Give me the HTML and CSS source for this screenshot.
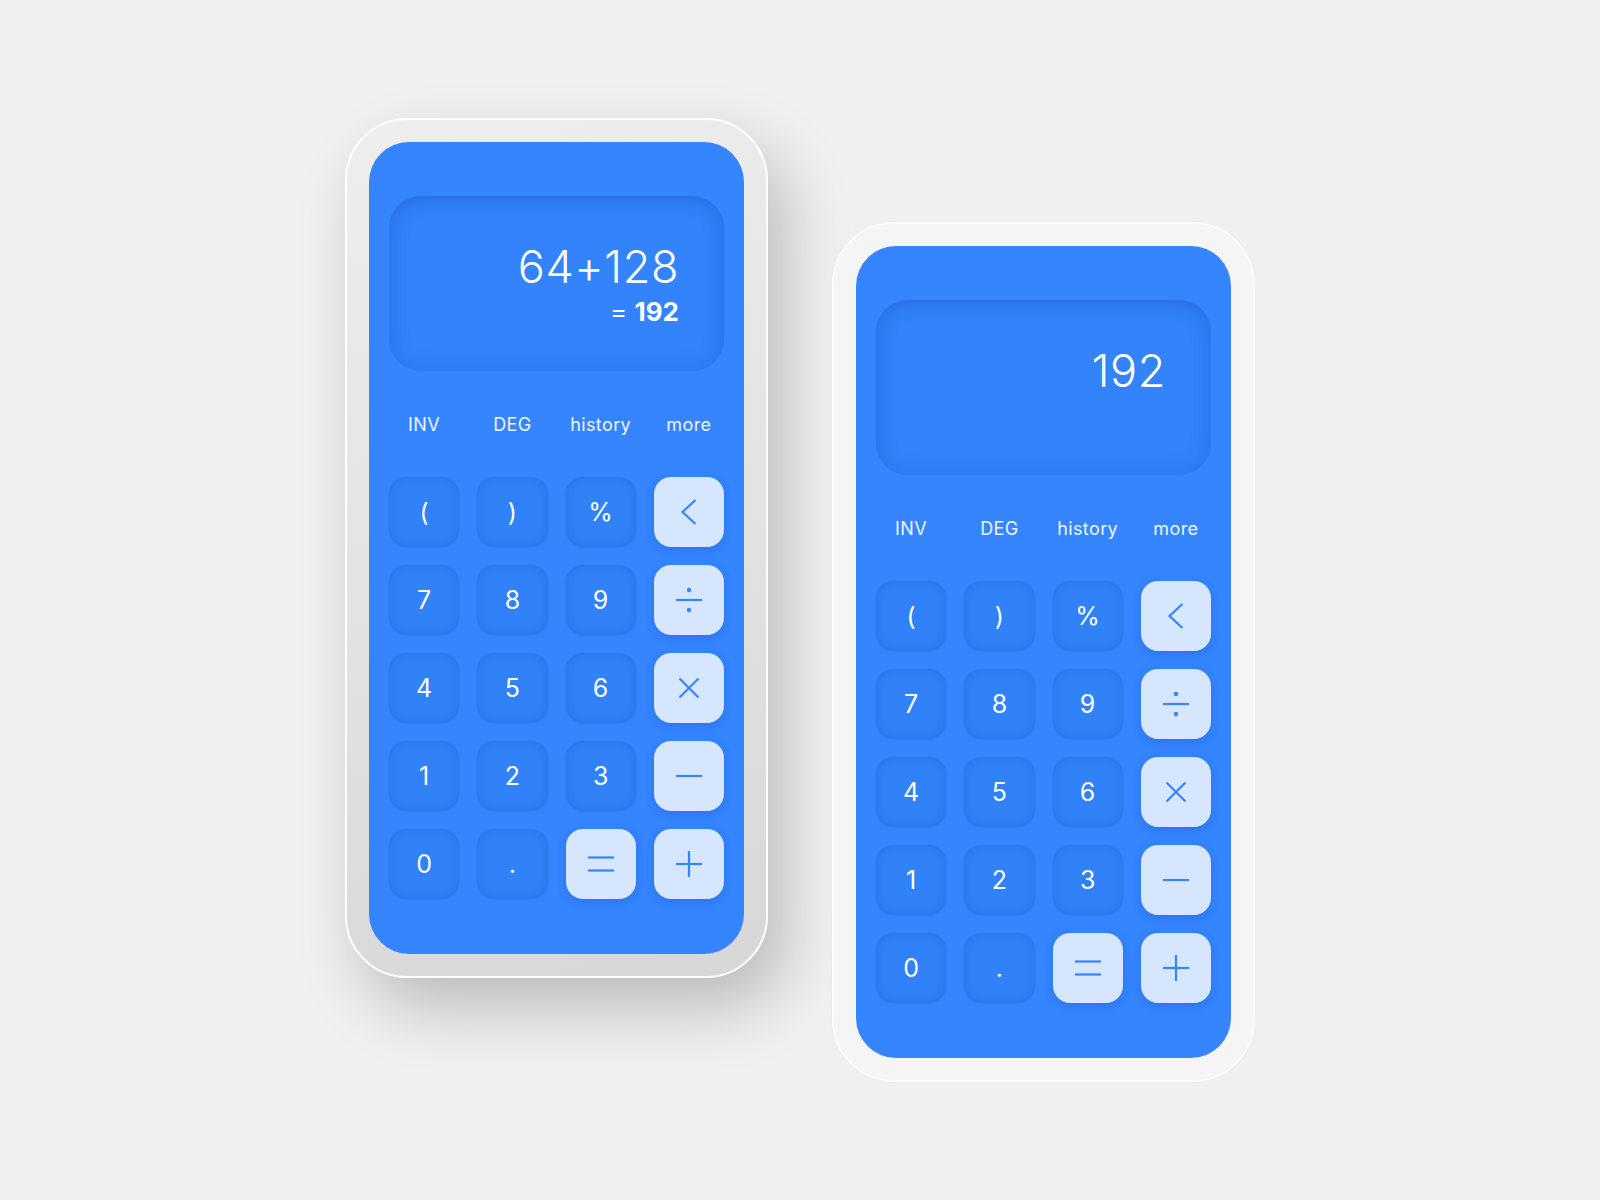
FILE: index.html
```html
<!DOCTYPE html>
<html lang="en">
<head>
<meta charset="utf-8">
<title>Calculator</title>
<link rel="stylesheet" href="styles.css">
</head>
<body>
<div class="stage">
  <div class="phone phone-dark">
    <div class="screen">
      <div class="display">
        <div class="expr">64+128</div>
        <div class="result"><span class="eq">=</span> <b>192</b></div>
      </div>
      <div class="labels"><span>INV</span><span>DEG</span><span>history</span><span>more</span></div>
      <div class="keys">
        <div class="key">(</div><div class="key">)</div><div class="key">%</div>
        <div class="key op"><svg viewBox="0 0 70 70"><polyline points="41.5,23 28.5,35 41.5,47"/></svg></div>
        <div class="key">7</div><div class="key">8</div><div class="key">9</div>
        <div class="key op"><svg viewBox="0 0 70 70"><line x1="22" y1="35" x2="48" y2="35"/><circle cx="35" cy="25" r="2.2"/><circle cx="35" cy="45" r="2.2"/></svg></div>
        <div class="key">4</div><div class="key">5</div><div class="key">6</div>
        <div class="key op"><svg viewBox="0 0 70 70"><line x1="25.5" y1="25.5" x2="44.5" y2="44.5"/><line x1="44.5" y1="25.5" x2="25.5" y2="44.5"/></svg></div>
        <div class="key">1</div><div class="key">2</div><div class="key">3</div>
        <div class="key op"><svg viewBox="0 0 70 70"><line x1="22" y1="35" x2="48" y2="35"/></svg></div>
        <div class="key">0</div><div class="key dot">.</div>
        <div class="key op"><svg viewBox="0 0 70 70"><line x1="22" y1="28.5" x2="48" y2="28.5"/><line x1="22" y1="41.5" x2="48" y2="41.5"/></svg></div>
        <div class="key op"><svg viewBox="0 0 70 70"><line x1="22" y1="35" x2="48" y2="35"/><line x1="35" y1="22" x2="35" y2="48"/></svg></div>
      </div>
    </div>
  </div>

  <div class="phone phone-light">
    <div class="screen">
      <div class="display">
        <div class="expr">192</div>
      </div>
      <div class="labels"><span>INV</span><span>DEG</span><span>history</span><span>more</span></div>
      <div class="keys">
        <div class="key">(</div><div class="key">)</div><div class="key">%</div>
        <div class="key op"><svg viewBox="0 0 70 70"><polyline points="41.5,23 28.5,35 41.5,47"/></svg></div>
        <div class="key">7</div><div class="key">8</div><div class="key">9</div>
        <div class="key op"><svg viewBox="0 0 70 70"><line x1="22" y1="35" x2="48" y2="35"/><circle cx="35" cy="25" r="2.2"/><circle cx="35" cy="45" r="2.2"/></svg></div>
        <div class="key">4</div><div class="key">5</div><div class="key">6</div>
        <div class="key op"><svg viewBox="0 0 70 70"><line x1="25.5" y1="25.5" x2="44.5" y2="44.5"/><line x1="44.5" y1="25.5" x2="25.5" y2="44.5"/></svg></div>
        <div class="key">1</div><div class="key">2</div><div class="key">3</div>
        <div class="key op"><svg viewBox="0 0 70 70"><line x1="22" y1="35" x2="48" y2="35"/></svg></div>
        <div class="key">0</div><div class="key dot">.</div>
        <div class="key op"><svg viewBox="0 0 70 70"><line x1="22" y1="28.5" x2="48" y2="28.5"/><line x1="22" y1="41.5" x2="48" y2="41.5"/></svg></div>
        <div class="key op"><svg viewBox="0 0 70 70"><line x1="22" y1="35" x2="48" y2="35"/><line x1="35" y1="22" x2="35" y2="48"/></svg></div>
      </div>
    </div>
  </div>
</div>
</body>
</html>
```

FILE: styles.css
```css
* { box-sizing: border-box; }
html, body {
  margin: 0;
  padding: 0;
  background: #f0f0f0;
  font-family: "Inter", "Lato", "Liberation Sans", sans-serif;
}
.stage {
  width: 1600px;
  height: 1200px;
  display: flex;
  align-items: flex-start;
  gap: 64px;
  padding: 118px 0 0 345px;
  overflow: hidden;
}
.phone {
  width: 423px;
  height: 860px;
  border-radius: 62px;
  padding: 22px;
  border: 2px solid #ffffff;
  flex: none;
}
.phone-dark {
  background: linear-gradient(165deg, #eeeeee 0%, #e3e3e3 50%, #d7d7d7 100%);
  box-shadow: 18px 30px 64px rgba(0, 0, 0, 0.22);
}
.phone-light {
  margin-top: 104px;
  background: #f5f5f5;
  border-color: #fbfbfb;
  box-shadow: 0 0 0 1px rgba(0,0,0,0.015);
}
.screen {
  width: 375px;
  height: 812px;
  border-radius: 40px;
  background: #3485ff;
  padding: 54px 20px 0 20px;
  display: flex;
  flex-direction: column;
}
.display {
  height: 175px;
  border-radius: 32px;
  background: #3283fc;
  box-shadow: inset 0 6px 14px rgba(0, 45, 150, 0.12), inset 0 0 22px rgba(0, 45, 150, 0.13);
  padding: 48px 45px 0 0;
  text-align: right;
  color: #ffffff;
}
.expr {
  font-size: 45px;
  line-height: 45px;
  font-weight: 300;
  letter-spacing: 0.6px;
}
.result {
  margin-top: 10px;
  font-size: 26px;
  line-height: 26px;
}
.result .eq { font-weight: 400; }
.result b { font-weight: 700; }
.labels {
  margin-top: 42px;
  height: 24px;
  display: grid;
  grid-template-columns: repeat(4, 1fr);
  column-gap: 18px;
  font-size: 18px;
  line-height: 24px;
  letter-spacing: 0.4px;
  color: #eef4ff;
  text-align: center;
}
.keys {
  margin-top: 40px;
  display: grid;
  grid-template-columns: repeat(4, 1fr);
  grid-auto-rows: 70px;
  gap: 18px;
}
.key {
  border-radius: 17px;
  background: #3181f8;
  box-shadow: inset 0 0 8px rgba(0, 45, 150, 0.2), 0 1px 3px rgba(0, 45, 150, 0.06);
  color: #ffffff;
  font-size: 25px;
  font-weight: 400;
  display: flex;
  align-items: center;
  justify-content: center;
}
.key.dot { font-size: 25px; }
.key.op {
  background: #d7e6ff;
  box-shadow: 0 3px 10px rgba(0, 50, 160, 0.2);
}
.key svg {
  width: 70px;
  height: 70px;
  display: block;
}
.key svg line, .key svg polyline {
  stroke: #3485ff;
  stroke-width: 2.2;
  fill: none;
}
.key svg circle {
  fill: #3485ff;
}
```
